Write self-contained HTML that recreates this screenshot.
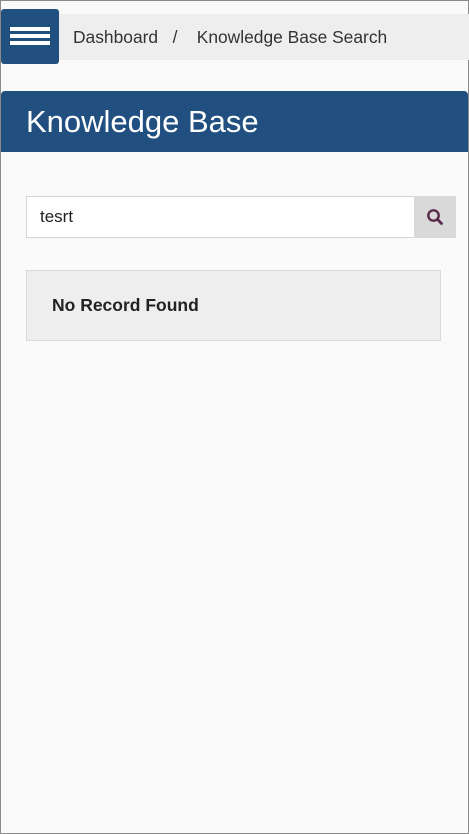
<!DOCTYPE html>
<html><head><meta charset="utf-8"><style>
*{box-sizing:border-box;margin:0;padding:0}
html,body{width:469px;height:834px;overflow:hidden}
body{background:#fafafa;font-family:"Liberation Sans",Arial,sans-serif;position:relative;border:1px solid #8a8a8a}
.abs{position:absolute}
</style></head><body>
<div class="abs" style="left:58px;top:13px;width:410px;height:46px;background:#eeeeee"></div>
<div class="abs" style="left:0;top:8px;width:58px;height:55px;background:#215080;border-radius:3px"></div>
<div class="abs" style="left:9px;top:26px;width:40px;height:4px;background:#fff"></div>
<div class="abs" style="left:9px;top:33px;width:40px;height:4px;background:#fff"></div>
<div class="abs" style="left:9px;top:40px;width:40px;height:4px;background:#fff"></div>
<div class="abs" style="left:72px;top:26px;font-size:17.4px;color:#333;white-space:nowrap">Dashboard&nbsp;&nbsp;&nbsp;/&nbsp;&nbsp;&nbsp;&nbsp;Knowledge Base Search</div>
<div class="abs" style="left:0;top:90px;width:467px;height:61px;background:#215080;border-radius:4px 4px 0 0"></div>
<div class="abs" style="left:25px;top:103px;font-size:31px;color:#fff">Knowledge Base</div>
<div class="abs" style="left:25px;top:195px;width:389px;height:42px;background:#fff;border:1px solid #d6d6d6;border-right:none"></div>
<div class="abs" style="left:39px;top:206px;font-size:17px;color:#222">tesrt</div>
<div class="abs" style="left:413px;top:195px;width:42px;height:42px;background:#d9d9d9"></div>
<svg class="abs" style="left:424px;top:206px" width="20" height="20" viewBox="0 0 20 20"><circle cx="8.5" cy="8.5" r="5.2" fill="none" stroke="#5a2a4a" stroke-width="2.4"/><line x1="12.3" y1="12.3" x2="16.5" y2="16.5" stroke="#5a2a4a" stroke-width="2.8" stroke-linecap="round"/></svg>
<div class="abs" style="left:25px;top:269px;width:415px;height:71px;background:#eeeeee;border:1px solid #d9d9d9"></div>
<div class="abs" style="left:51px;top:294px;font-size:17.5px;font-weight:bold;color:#222">No Record Found</div>
</body></html>
